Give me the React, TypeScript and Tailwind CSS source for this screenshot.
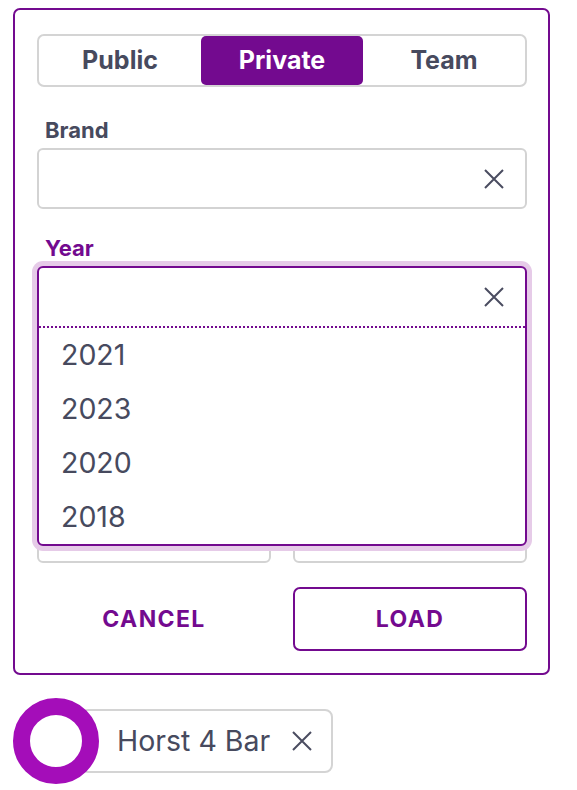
import React from "react";

function XIcon({ size = 20 }: { size?: number }) {
  return (
    <svg width={size} height={size} viewBox="0 0 20 20" fill="none">
      <path d="M1 1L19 19M19 1L1 19" stroke="#4a4c60" strokeWidth="2" strokeLinecap="butt" />
    </svg>
  );
}

function Field({ label, className = "" }: { label?: string; className?: string }) {
  return (
    <div className={"flex flex-col " + className}>
      <div className="h-[26px] leading-[26px] pl-[8px] text-[22px] font-bold text-[#474a5e]">{label}</div>
      <div className="mt-[5px] h-[61px] rounded-[6px] border-2 border-[#d3d3d3] bg-white flex items-center justify-end pr-[21px]">
        <XIcon />
      </div>
    </div>
  );
}

export default function App() {
  const years = ["2021", "2023", "2020", "2018"];
  return (
    <div className="w-[577px] h-[790px] bg-white overflow-hidden" style={{ fontFamily: "Inter, 'Noto Sans', sans-serif" }}>
      <div className="ml-[13px] mt-[8px] w-[537px] border-2 border-[#730a8f] rounded-[7px] pl-[22px] pr-[21px] pt-[24px] pb-[22px] flex flex-col">
        {/* Tabs */}
        <div className="h-[53px] border-2 border-[#d4d4d4] rounded-[7px] grid grid-cols-3">
          <div className="flex items-center justify-center text-[25px] font-bold text-[#474a5e]">Public</div>
          <div className="flex items-center justify-center text-[25px] font-bold text-white bg-[#730a8f] rounded-[5px]">Private</div>
          <div className="flex items-center justify-center text-[25px] font-bold text-[#474a5e]">Team</div>
        </div>

        <Field label="Brand" className="mt-[30px]" />

        {/* Year (focused with open dropdown) */}
        <div className="mt-[26px] flex flex-col">
          <div className="h-[26px] leading-[26px] pl-[8px] text-[22px] font-bold text-[#730a8f]">Year</div>
          <div className="mt-[5px] h-[61px] relative">
            <div className="absolute left-0 right-0 top-0 z-10 bg-white border-2 border-[#730a8f] rounded-[6px] shadow-[0_0_0_5px_#e6cbe8]">
              <div className="h-[60px] border-b-2 border-dotted border-[#730a8f] flex items-center justify-end pr-[21px]">
                <XIcon />
              </div>
              {years.map((y) => (
                <div key={y} className="h-[54px] flex items-center pl-[22px] text-[28.5px] text-[#474a5e]">
                  {y}
                </div>
              ))}
            </div>
          </div>
        </div>

        <Field className="mt-[26px]" />

        <div className="mt-[26px] grid grid-cols-2 gap-[22px]">
          <Field />
          <Field />
        </div>

        {/* Buttons */}
        <div className="mt-[24px] grid grid-cols-2 gap-[22px]">
          <button className="h-[64px] flex items-center justify-center text-[23px] font-bold tracking-[0.06em] text-[#730a8f]">
            CANCEL
          </button>
          <button className="h-[64px] flex items-center justify-center border-2 border-[#730a8f] rounded-[7px] text-[23px] font-bold tracking-[0.06em] text-[#730a8f]">
            LOAD
          </button>
        </div>
      </div>

      {/* Chip */}
      <div className="mt-[23px] ml-[13px] flex items-center">
        <div className="relative z-10 w-[86px] h-[86px] rounded-full border-[17px] border-[#a40db9] bg-white shrink-0" />
        <div className="-ml-[19px] h-[64px] border-2 border-[#d4d4d4] rounded-[8px] flex items-center pl-[35px] pr-[19px] bg-white">
          <span className="text-[28.5px] text-[#474a5e]">Horst 4 Bar</span>
          <span className="ml-[22px] flex items-center">
            <XIcon />
          </span>
        </div>
      </div>
    </div>
  );
}
